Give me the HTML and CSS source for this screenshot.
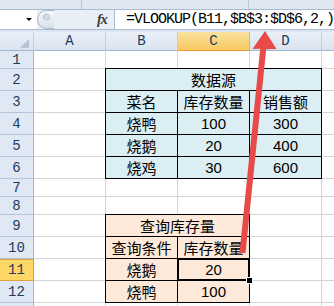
FILE: index.html
```html
<!DOCTYPE html>
<html lang="zh-CN">
<head>
    <meta charset="UTF-8">
    <title>VLOOKUP 查询库存</title>
    <link rel="stylesheet" href="styles.css">
</head>
<body>
<div class="window">
    <div class="ribbon-edge">
        <div class="pane pane-left"></div>
        <div class="pane pane-mid"></div>
    </div>

    <div class="formula-bar">
        <div class="name-box"><span class="drop"></span></div>
        <svg class="grip" width="17" height="19" viewBox="0 0 17 19">
            <defs>
                <linearGradient id="gripFill" x1="0" y1="0" x2="0" y2="1">
                    <stop offset="0" stop-color="#f7f9fc"/>
                    <stop offset="1" stop-color="#d6e0ec"/>
                </linearGradient>
            </defs>
            <path d="M17 0.5 H9.5 A9 9 0 0 0 9.5 18.5 H17" fill="url(#gripFill)" stroke="#a8b7ca"/>
            <circle cx="9.5" cy="7" r="3" fill="#d3dce8" stroke="#b6c3d3"/>
        </svg>
        <div class="fx">fx</div>
        <div class="formula">=VLOOKUP(B11,$B$3:$D$6,2,)</div>
    </div>
    <div class="band"></div>

    <div class="sheet">
        <!-- column headers -->
        <div class="ch corner"><span class="all"></span></div>
        <div class="ch">A</div>
        <div class="ch">B</div>
        <div class="ch on">C</div>
        <div class="ch">D</div>
        <div class="ch"></div>

        <div class="rh">1</div><div class="c"></div><div class="c"></div><div class="c"></div><div class="c"></div><div class="c"></div>
        <div class="rh">2</div><div class="c"></div><div class="c"></div>
        <div class="rh">3</div><div class="c"></div><div class="c"></div>
        <div class="rh">4</div><div class="c"></div><div class="c"></div>
        <div class="rh">5</div><div class="c"></div><div class="c"></div>
        <div class="rh">6</div><div class="c"></div><div class="c"></div>
        <div class="rh">7</div><div class="c"></div><div class="c"></div><div class="c"></div><div class="c"></div><div class="c"></div>
        <div class="rh">8</div><div class="c"></div><div class="c"></div><div class="c"></div><div class="c"></div><div class="c"></div>
        <div class="rh">9</div><div class="c"></div><div class="c"></div><div class="c"></div>
        <div class="rh">10</div><div class="c"></div><div class="c"></div><div class="c"></div>
        <div class="rh on">11</div><div class="c"></div><div class="c"></div><div class="c"></div>
        <div class="rh">12</div><div class="c"></div><div class="c"></div><div class="c"></div>
        <!-- row 13 only peeks in at the bottom edge -->
        <div class="rh"></div><div class="c"></div><div class="c"></div><div class="c"></div><div class="c"></div><div class="c"></div>

        <!-- 数据源 B2:D6 -->
        <div class="tbl src">
            <div class="span">数据源</div>
            <div>菜名</div><div>库存数量</div><div>销售额</div>
            <div>烧鸭</div><div>100</div><div>300</div>
            <div>烧鹅</div><div>20</div><div>400</div>
            <div>烧鸡</div><div>30</div><div>600</div>
        </div>

        <!-- 查询库存量 B9:C12 -->
        <div class="tbl qry">
            <div class="span">查询库存量</div>
            <div>查询条件</div><div>库存数量</div>
            <div>烧鹅</div><div class="sel">20</div>
            <div>烧鸭</div><div>100</div>
        </div>
    </div>

    <svg class="arrow" width="334" height="306" viewBox="0 0 334 306">
        <polygon points="239.5,252.7 260.2,48.8 252.5,49 265,31 276.5,49 266.2,49.2 245.5,253.3" fill="#e84a4a"/>
    </svg>
</div>
</body>
</html>
```

FILE: styles.css
```css
body {
    margin: 0;
    background: #fff;
}
.window {
    position: relative;
    width: 334px;
    height: 306px;
    overflow: hidden;
    font-family: 'Liberation Sans', 'Noto Sans CJK SC', sans-serif;
}

/* top edge of the ribbon */
.ribbon-edge {
    display: flex;
    height: 9px;
    background: #dfe7f1;
    border-bottom: 1px solid #a9bbd1;
}
.pane {
    border-right: 1px solid #b7c6d8;
}
.pane-left {
    width: 81px;
}
.pane-mid {
    width: 166px;
}

/* formula bar */
.formula-bar {
    display: flex;
    height: 19px;
    background: #e9eff7;
    border-bottom: 1px solid #a9bbd1;
}
.name-box {
    width: 37px;
    background: #fff;
}
.drop {
    display: block;
    width: 0;
    height: 0;
    margin: 8px 0 0 26px;
    border-left: 3px solid transparent;
    border-right: 3px solid transparent;
    border-top: 3px solid #000;
}
.grip {
    display: block;
}
.fx {
    width: 14px;
    margin-left: 43px;
    font-family: 'Liberation Serif', serif;
    font-style: italic;
    font-weight: bold;
    font-size: 14px;
    line-height: 19px;
    color: #3a3a3a;
    letter-spacing: -1px;
}
.formula {
    flex: 1;
    margin-left: 3px;
    padding-left: 11px;
    background: #fff;
    border-left: 1px solid #a9bbd1;
    font-family: 'Liberation Mono', monospace;
    font-size: 15px;
    letter-spacing: -1px;
    line-height: 19px;
    white-space: nowrap;
    overflow: hidden;
    color: #000;
}
.band {
    height: 2px;
    background: #dde6f0;
}

/* sheet grid */
.sheet {
    display: grid;
    grid-template-columns: 34px repeat(5, 72px);
    grid-template-rows: 19px 18px repeat(5, 22px) 18px 18px repeat(5, 22px);
    width: 394px;
}
.sheet > div {
    box-sizing: border-box;
}
.c {
    border-right: 1px solid #d4d4d4;
    border-bottom: 1px solid #d4d4d4;
}
.ch, .rh {
    display: flex;
    align-items: center;
    justify-content: center;
    font-family: 'Liberation Mono', monospace;
    font-size: 14px;
    color: #1f3a5f;
}
.ch {
    background: linear-gradient(#e9eff7, #dae4f0);
    border-right: 1px solid #c0cfe0;
    border-bottom: 1px solid #9eb6ce;
}
.rh {
    background: #dfe8f3;
    border-right: 1px solid #9eb6ce;
    border-bottom: 1px solid #b3c5d9;
}
.ch.on {
    background: linear-gradient(#fbe2a2, #f8c95f);
    border-right-color: #f0b24c;
    border-bottom-color: #e99a35;
}
.rh.on {
    background: #ffd766;
    border-right-color: #e99a35;
    border-bottom-color: #e0a040;
    box-shadow: inset 0 1px 0 #e0a040;
}
.corner {
    align-items: flex-end;
    justify-content: flex-end;
}
.all {
    width: 0;
    height: 0;
    margin: 0 4px 2px 0;
    border-left: 9px solid transparent;
    border-bottom: 9px solid #b5c3d4;
}

/* bordered data blocks */
.tbl {
    display: grid;
    gap: 1px;
    padding: 1px;
    margin: -1px 0 0 -1px;
    background: #000;
}
.tbl > div {
    display: flex;
    align-items: center;
    justify-content: center;
    font-size: 15px;
    color: #000;
}
.src {
    grid-area: 3 / 3 / 8 / 6;
    grid-template-columns: repeat(3, 71px);
    grid-template-rows: repeat(5, 21px);
}
.src > div {
    background: #daeef3;
}
.qry {
    grid-area: 10 / 3 / 14 / 5;
    grid-template-columns: repeat(2, 71px);
    grid-template-rows: repeat(4, 21px);
}
.qry > div {
    background: #fde9d9;
}
.span {
    grid-column: 1 / -1;
}
.tbl > .sel {
    position: relative;
    z-index: 1;
    box-shadow: inset 0 0 0 1px #000;
}
.sel::after {
    content: "";
    position: absolute;
    right: -4px;
    bottom: -4px;
    width: 5px;
    height: 5px;
    background: #000;
    border: 1px solid #fff;
}

/* annotation arrow */
.arrow {
    position: absolute;
    left: 0;
    top: 0;
    pointer-events: none;
}
```
